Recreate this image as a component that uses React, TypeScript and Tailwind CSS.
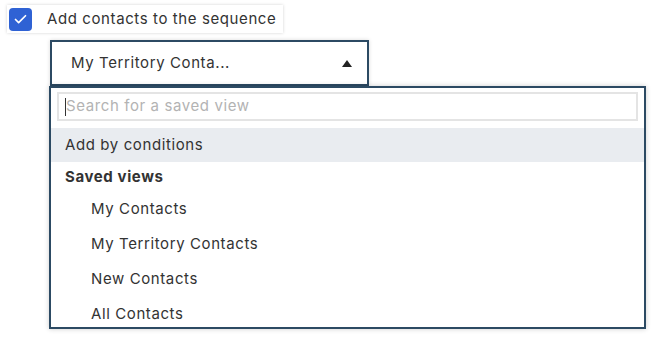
import { Check } from "lucide-react";

const SAVED_VIEWS = ["My Contacts", "My Territory Contacts", "New Contacts", "All Contacts"];

export default function App() {
  return (
    <div className="h-[338px] w-[654px] overflow-hidden bg-white font-['Inter','Liberation_Sans',sans-serif] text-[15px] tracking-[0.6px] text-[#333]">
      {/* checkbox label */}
      <div className="ml-[7px] mt-[5px] flex h-[28px] w-[276px] items-center bg-white pl-[2px] shadow-[0_0_3px_rgba(0,0,0,0.18)]">
        <span className="grid h-[23px] w-[23px] place-items-center rounded-[4px] bg-[#2f62d4]">
          <Check className="h-[15px] w-[15px] text-white" strokeWidth={2.75} />
        </span>
        <span className="ml-[15px]">Add contacts to the sequence</span>
      </div>

      {/* select trigger */}
      <div className="ml-[50px] mt-[7px] flex h-[46px] w-[319px] items-center justify-between border-2 border-[#2c4a63] bg-white pl-[19px] pr-[15px] shadow-[0_0_4px_rgba(0,0,0,0.15)]">
        <span>My Territory Conta...</span>
        <svg width="10" height="7" viewBox="0 0 10 7" className="mt-[1px]">
          <path d="M5 0L10 7H0Z" fill="#222" />
        </svg>
      </div>

      {/* dropdown */}
      <div className="ml-[49px] h-[243px] w-[597px] overflow-hidden border-2 border-[#2c4a63] bg-white shadow-[0_0_5px_rgba(0,0,0,0.2)]">
        <div className="px-[6px] pt-[4px]">
          <div className="flex h-[29px] items-center border-2 border-[#e4e4e4] pl-[6px]">
            <span className="h-[18px] w-px bg-[#333]" />
            <span className="text-[#b3b3b3]">Search for a saved view</span>
          </div>
        </div>
        <div className="mt-[7px] flex h-[34px] items-center bg-[#e9ecf0] pl-[14px]">Add by conditions</div>
        <div className="flex h-[30px] items-center pl-[14px] font-bold">Saved views</div>
        {SAVED_VIEWS.map((v) => (
          <div key={v} className="flex h-[35px] items-center pl-[40px]">
            {v}
          </div>
        ))}
      </div>
    </div>
  );
}
